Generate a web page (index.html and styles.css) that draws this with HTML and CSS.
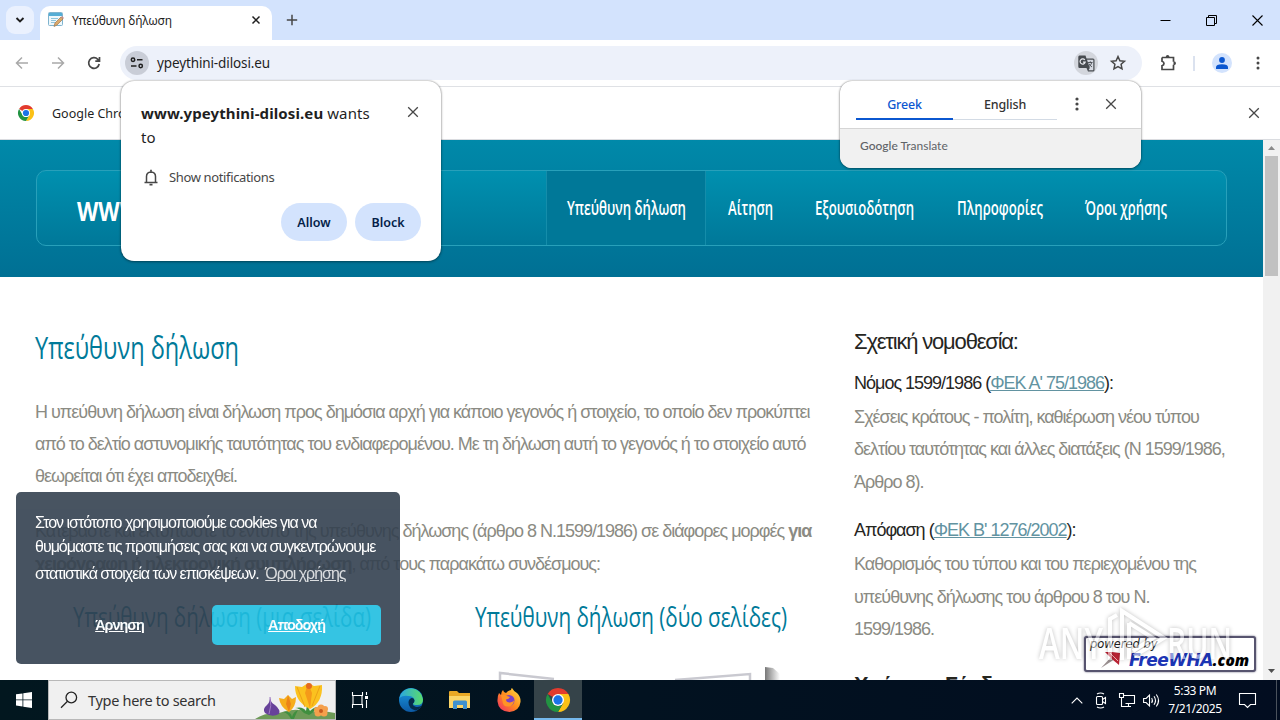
FILE: index.html
```html
<!DOCTYPE html>
<html lang="el">
<head>
  <meta charset="UTF-8">
  <meta name="viewport" content="width=device-width, initial-scale=1">
  <title>Υπεύθυνη δήλωση</title>
  <link rel="stylesheet" href="styles.css">
</head>
<body>
  <!-- tab strip -->
  <div class="tabstrip">
    <div class="tab-search"><svg width="10" height="10" viewBox="0 0 10 10"><path d="M1.500 3l3.500 3.500L8.500 3" class="ln dark w2"/></svg></div>
    <div class="tab">
      <svg class="favicon" width="16" height="16" viewBox="0 0 16 16">
        <rect x="0.500" y="0.500" width="14" height="13" rx="1" fill="#eef7fb" stroke="#7fb4cf"/>
        <rect x="1" y="1" width="13" height="3" fill="#55add5"/>
        <path d="M3 6.500h7M3 8.500h5M3 10.500h4" stroke="#8fc4db"/>
        <path d="M6 14.500l1-3.500 6-6 2 2-6 6z" fill="#dca96a" stroke="#9a7750" stroke-width=".7"/>
        <path d="M13 5l1-1 2 2-1 1z" fill="#c98d8d"/>
      </svg>
      <span class="tab-title">Υπεύθυνη δήλωση</span>
      <svg class="tab-close" width="10" height="10" viewBox="0 0 10 10"><path d="M1.500 1.500l7 7M8.500 1.500l-7 7" class="ln dark w15"/></svg>
    </div>
    <svg class="tab-new" width="12" height="12" viewBox="0 0 12 12"><path d="M6 .8v10.400M.8 6h10.400" class="ln w15"/></svg>
    <div class="win-buttons">
      <svg width="11" height="11" viewBox="0 0 11 11"><path d="M.5 5.500h10" stroke="#000"/></svg>
      <svg width="11" height="11" viewBox="0 0 11 11"><path d="M.5 2.500h8v8h-8zM2.500 2.500v-2h8v8h-2" fill="none" stroke="#000"/></svg>
      <svg width="11" height="11" viewBox="0 0 11 11"><path d="M.5 .5l10 10M10.500 .5l-10 10" stroke="#000" stroke-width="1.100"/></svg>
    </div>
  </div>

  <!-- toolbar -->
  <div class="toolbar">
    <svg class="nav-ico" width="14" height="14" viewBox="0 0 14 14"><path d="M13 7H2M7 1.500L1.500 7 7 12.500" class="ln pale w15"/></svg>
    <svg class="nav-ico" width="14" height="14" viewBox="0 0 14 14"><path d="M1 7h11M7 1.500L12.500 7 7 12.500" class="ln pale w15"/></svg>
    <svg class="nav-ico" width="14" height="14" viewBox="0 0 14 14"><path d="M12.200 8A5.300 5.300 0 1 1 10.800 3.300L12.300 4.800M12.500 1v4.200H8.300" class="ln w17"/></svg>
    <div class="omnibox">
      <div class="site-info">
        <svg width="14" height="12" viewBox="0 0 14 12"><circle cx="3" cy="2.700" r="1.700" class="ln dark w15"/><path d="M7 2.700h5.500M1 9h5.500" class="ln dark w15"/><circle cx="10.700" cy="9" r="1.700" class="ln dark w15"/></svg>
      </div>
      <span class="url">ypeythini-dilosi.eu</span>
      <div class="translate-ico">
        <svg width="17" height="17" viewBox="0 0 17 17">
          <path d="M1.500 0.500h6l1 3h6.500q1.500 0 1.500 1.500v10q0 1.500-1.500 1.500h-5l-1.500-3.500h-7Q.3 13 .3 11.500V2Q.3.5 1.500.5z" fill="#474b50"/>
          <path d="M9 4.700h6.300v10.600h-4.800l1.300-2.300z" fill="#d5d9e2"/>
          <path d="M6.800 5A2.600 2.600 0 1 0 7.200 7.200H5" fill="none" stroke="#e9ebf0" stroke-width="1.200"/>
          <path d="M10 7.500h4.500M12.300 6.300v1.200M13.800 7.600q-.8 2.600-3 4.200M11 8.700q1 2 3 3.300" fill="none" stroke="#474b50" stroke-width=".9"/>
        </svg>
      </div>
      <svg width="16" height="16" viewBox="0 0 16 16"><path d="M8 1.500l1.900 4.200 4.600.5-3.400 3.100.9 4.500L8 11.500l-4 2.300.9-4.500L1.500 6.200l4.600-.5z" class="ln w15"/></svg>
    </div>
    <svg class="ext" width="18" height="18" viewBox="0 0 18 18"><path d="M2 3.500h11.500V7.800M13.500 10.800v4.700H2v-3.800q2-.5 2-2.200T2 7.200V3.500" class="ln w17"/><path d="M5.600 3.200q.3-2.200 2-2.200t2 2.200zM13.500 7.300q2.500.2 2.500 2t-2.500 2z" fill="#474747"/></svg>
    <span class="bar"></span>
    <div class="avatar"><svg width="12" height="12" viewBox="0 0 12 12"><circle cx="6" cy="3" r="2.900" fill="#0b57d0"/><path d="M0 12V10.200Q0 7.200 6 7.200t6 3V12z" fill="#0b57d0"/></svg></div>
    <svg class="menu" width="4" height="14" viewBox="0 0 4 14"><g fill="#474747"><circle cx="2" cy="2" r="1.500"/><circle cx="2" cy="7" r="1.500"/><circle cx="2" cy="12" r="1.500"/></g></svg>
  </div>

  <div class="infobar">
    <svg width="16" height="16" viewBox="0 0 48 48">
      <circle cx="24" cy="24" r="24" fill="#fff"/>
      <path d="M24 24L3.200 12A24 24 0 0 1 44.800 12H24z" fill="#e33b2e"/>
      <path d="M44.800 12A24 24 0 0 1 24 48L34.400 30 24 12z" fill="#fbc116"/>
      <path d="M3.200 12A24 24 0 0 0 24 48L34.400 30A12 12 0 0 1 13.600 30z" fill="#229342"/>
      <circle cx="24" cy="24" r="12" fill="#fff"/><circle cx="24" cy="24" r="9.300" fill="#1a73e8"/>
    </svg>
    <span>Google Chrome</span>
    <svg class="info-close" width="12" height="12" viewBox="0 0 12 12"><path d="M1.200 1.200l9.600 9.600M10.800 1.200l-9.600 9.600" class="ln w13"/></svg>
  </div>

  <!-- page -->
  <div class="viewport">
    <div class="page">
      <header class="header">
        <div class="navbox">
          <div class="brand"><svg width="64" height="34"><text x="0" y="27" textLength="64" lengthAdjust="spacingAndGlyphs">WWW</text></svg></div>
          <nav class="nav">
            <a class="active"><svg width="119" height="34"><text x="0" y="25" textLength="119" lengthAdjust="spacingAndGlyphs">Υπεύθυνη δήλωση</text></svg></a>
            <a><svg width="45" height="34"><text x="0" y="25" textLength="45" lengthAdjust="spacingAndGlyphs">Αίτηση</text></svg></a>
            <a><svg width="100" height="34"><text x="0" y="25" textLength="99" lengthAdjust="spacingAndGlyphs">Εξουσιοδότηση</text></svg></a>
            <a><svg width="86" height="34"><text x="0" y="25" textLength="86" lengthAdjust="spacingAndGlyphs">Πληροφορίες</text></svg></a>
            <a><svg width="82" height="34"><text x="0" y="25" textLength="82" lengthAdjust="spacingAndGlyphs">Όροι χρήσης</text></svg></a>
          </nav>
        </div>
      </header>

      <div class="columns">
        <main class="main">
          <svg class="title" width="210" height="48"><text x="0" y="34" textLength="204" lengthAdjust="spacingAndGlyphs">Υπεύθυνη δήλωση</text></svg>
          <p>Η υπεύθυνη δήλωση είναι δήλωση προς δημόσια αρχή για κάποιο γεγονός ή στοιχείο, το οποίο δεν προκύπτει<br>από το δελτίο αστυνομικής ταυτότητας του ενδιαφερομένου. Με τη δήλωση αυτή το γεγονός ή το στοιχείο αυτό<br>θεωρείται ότι έχει αποδειχθεί.</p>
          <p>Κατεβάστε και εκτυπώστε το έντυπο της υπεύθυνης δήλωσης (άρθρο 8 Ν.1599/1986) σε διάφορες μορφές <b>για</b><br><b>χειρόγραφη ή ηλεκτρονική συμπλήρωση</b>, από τους παρακάτω συνδέσμους:</p>
          <div class="forms">
            <div class="form">
              <svg class="form-title" width="300" height="44"><text x="0" y="30" textLength="298" lengthAdjust="spacingAndGlyphs">Υπεύθυνη δήλωση (μια σελίδα)</text></svg>
            </div>
            <div class="form">
              <svg class="form-title" width="314" height="44"><text x="0" y="30" textLength="312" lengthAdjust="spacingAndGlyphs">Υπεύθυνη δήλωση (δύο σελίδες)</text></svg>
              <svg class="sheets" width="310" height="20" viewBox="0 0 310 20">
                <defs><linearGradient id="shade"><stop offset="0" stop-color="#777"/><stop offset="1" stop-color="#fff"/></linearGradient></defs>
                <path d="M290 2l8 1 7 6v11h-15z" fill="url(#shade)"/>
                <path d="M25 20V8l54 6M275 20V9l-75 6" fill="none" stroke="#c9c9d0" stroke-width="2.500"/>
              </svg>
            </div>
          </div>
        </main>

        <aside class="side">
          <h2>Σχετική νομοθεσία:</h2>
          <h3>Νόμος 1599/1986 (<a>ΦΕΚ Α' 75/1986</a>):</h3>
          <p>Σχέσεις κράτους - πολίτη, καθιέρωση νέου τύπου<br>δελτίου ταυτότητας και άλλες διατάξεις (Ν 1599/1986,<br>Άρθρο 8).</p>
          <h3>Απόφαση (<a>ΦΕΚ Β' 1276/2002</a>):</h3>
          <p>Καθορισμός του τύπου και του περιεχομένου της<br>υπεύθυνης δήλωσης του άρθρου 8 του Ν.<br>1599/1986.</p>
          <h2 class="links">Χρήσιμοι Σύνδεσμοι</h2>
        </aside>
      </div>

      <!-- cookie banner -->
      <div class="cookies">
        <p>Στον ιστότοπο χρησιμοποιούμε cookies για να<br>θυμόμαστε τις προτιμήσεις σας και να συγκεντρώνουμε<br><span class="last">στατιστικά στοιχεία των επισκέψεων. <a>Όροι χρήσης</a></span></p>
        <div class="cookie-buttons">
          <a class="deny">Άρνηση</a>
          <a class="allow">Αποδοχή</a>
        </div>
      </div>

      <!-- hosting badge -->
      <div class="hosting">
        <span class="powered">powered by</span>
        <div class="wha">
          <svg width="22" height="18" viewBox="0 0 22 18"><path d="M1 17L12 5l3 3z" fill="#9a8f90"/><path d="M5 1h7l8 1-1 12-6-5-3-3z" fill="#b92334"/><path d="M10 2l8 8" stroke="#efb0b0"/></svg>
          <b>FreeWHA</b><i>.com</i>
        </div>
      </div>
      <svg class="watermark" width="200" height="62" viewBox="0 0 200 62">
        <g class="wm-text">
          <text x="2" y="50" textLength="64" lengthAdjust="spacingAndGlyphs">ANY</text>
          <text x="130" y="50" textLength="65" lengthAdjust="spacingAndGlyphs">RUN</text>
        </g>
        <path class="wm-mark" d="M73 51V10l7-4M85 51V2l42 27-30 18M92 14v36M92 14l24 15-20 13"/>
      </svg>
    </div>
    <div class="scrollbar">
      <svg width="17" height="16"><path d="M5 10l3.500-4 3.500 4z" fill="#8a8a8a"/></svg>
      <div class="thumb"></div>
      <svg class="down" width="17" height="17"><path d="M5 6l3.500 4L12 6z" fill="#505050"/></svg>
    </div>
  </div>

  <!-- taskbar -->
  <div class="taskbar">
    <div class="start"><svg width="16" height="16" viewBox="0 0 16 16"><path d="M0 2.300L6.500 1.400V7.500H0zM7.300 1.200L16 0v7.500H7.300zM0 8.300h6.500v6.200L0 13.600zM7.300 8.300H16V16l-8.700-1.200z" fill="#fff"/></svg></div>
    <div class="search">
      <svg width="18" height="18" viewBox="0 0 18 18"><circle cx="11.300" cy="6.500" r="5.300" fill="none" stroke="#222" stroke-width="1.300"/><path d="M7.500 10.300L1 16.800" stroke="#222" stroke-width="1.300"/></svg>
      <span>Type here to search</span>
      <svg class="flowers" width="80" height="38" viewBox="0 0 80 38">
        <path d="M0 38q10-7 24-6 16-6 30-1 14-2 26 1v6z" fill="#6d9a57"/>
        <path d="M36 38q-3-6-8-7 8-1 9 5 1-5 6-7-3 6-4 9zM49 32q-5-5-9-5 8-2 11 3l1-6 3 6q4-4 8-4-5 6-9 8z" fill="#3f8f3f"/>
        <path d="M15 16q0 5 5 8 6 5 4 9-7 4-14-1-3-4 2-8 3-3 3-8z" fill="#67429a"/><path d="M15 16q2 9-1 17" stroke="#a17cc6" fill="none"/>
        <path d="M24 17l5 1 4-4 4 4 4-2q0 10-7 15-9-5-10-14z" fill="#f6ad1c"/><path d="M33 14l3 9-2 8-3-8z" fill="#ec8419"/>
        <path d="M40 5l7 1 6-4 6 3 8-1q1 17-12 24-15-7-15-23z" fill="#fbc21f"/><path d="M53 2l4 10-2 15-5-15z" fill="#f59a19"/><path d="M42 6l8 20M65 5l-8 20" stroke="#eda117" fill="none"/><circle cx="54" cy="5" r="3" fill="#e56a20"/>
        <g fill="#f5a04c"><circle cx="66" cy="27" r="3.500"/><circle cx="69" cy="32" r="3.500"/><circle cx="63" cy="32" r="3.500"/><circle cx="62" cy="29" r="3"/><circle cx="70" cy="28" r="3"/></g><circle cx="66" cy="30" r="2" fill="#c65a1e"/>
      </svg>
    </div>
    <div class="app view"><svg width="18" height="18" viewBox="0 0 18 18"><path d="M1.500 1v3.500h10V1M1.500 17v-3.500h10V17M2 4.500v9M11 4.500v9M15.500 1v3M15.500 9v8" fill="none" stroke="#fff" stroke-width="1.100"/><rect x="14" y="5" width="3" height="3" fill="#fff"/></svg></div>
    <div class="app"><svg width="24" height="24" viewBox="0 0 24 24">
      <defs><linearGradient id="edge1" x2="1"><stop offset="0" stop-color="#2aa7e0"/><stop offset="1" stop-color="#5bdc6b"/></linearGradient><linearGradient id="edge2" x2="0" y2="1"><stop offset="0" stop-color="#1b9be2"/><stop offset="1" stop-color="#0c59a4"/></linearGradient></defs>
      <circle cx="12" cy="12" r="12" fill="url(#edge2)"/>
      <path d="M.3 10A12 12 0 0 1 24 11.500Q24 17 18 17q-4 0-4-1.500 1.500-1 1.500-3Q15 8 9.500 8 4 7 .3 10z" fill="url(#edge1)"/>
      <path d="M14 15.500q1.500-1 1.500-3Q15.200 9.500 12.500 10q-3 1-3 4.500 0 6 7 8 4-1 6.500-5-3 2-6.500 1.200Q13 17.500 14 15.500z" fill="#052b4d"/>
    </svg></div>
    <div class="app"><svg width="22" height="20" viewBox="0 0 22 20"><path d="M0 2q0-1 1-1h7l2 2h11v15H0z" fill="#e9a825"/><path d="M0 6h21v12H0z" fill="#fbd568"/><path d="M4 19v-7q0-1.500 1.500-1.500h11Q18 10.500 18 12v7h-4v-4H8v4z" fill="#3e91cf"/></svg></div>
    <div class="app"><svg width="24" height="24" viewBox="0 0 24 24">
      <defs><linearGradient id="fox" x1="1" x2="0" y2="1"><stop offset="0" stop-color="#ffe244"/><stop offset=".5" stop-color="#ff8a1e"/><stop offset="1" stop-color="#f0256c"/></linearGradient></defs>
      <path d="M2 5l2 2q0-3 2-5 .5 2.500 3 3 2-2.500 5-3 0-1.500 1-2 1.500 3 5 5 4 4 3.500 9-1 9-11 10Q1.500 23.500.5 13.500.3 8 2 5z" fill="url(#fox)"/>
      <circle cx="12" cy="12.500" r="5.500" fill="#7a41c7"/><path d="M4 7q4-1 6 1l3 1q-1 2-4 2.500 0 3 4 3 3-.5 4-2-.5 6-6 6T5.500 13z" fill="#ff9425"/>
    </svg></div>
    <div class="app on"><svg width="24" height="24" viewBox="0 0 48 48">
      <path d="M24 24L3.200 12A24 24 0 0 1 44.800 12H24z" fill="#e33b2e"/>
      <path d="M44.800 12A24 24 0 0 1 24 48L34.400 30 24 12z" fill="#fbc116"/>
      <path d="M3.200 12A24 24 0 0 0 24 48L34.400 30A12 12 0 0 1 13.600 30z" fill="#229342"/>
      <circle cx="24" cy="24" r="12" fill="#fff"/><circle cx="24" cy="24" r="9.300" fill="#1a73e8"/>
    </svg></div>
    <div class="tray">
      <svg width="12" height="7" viewBox="0 0 12 7"><path d="M.7 6.300L6 1l5.300 5.300" class="ti"/></svg>
      <svg width="12" height="17" viewBox="0 0 12 17"><rect x="1.500" y="4.500" width="6" height="8" rx="1" class="ti"/><path d="M7.500 7.500l3-2v6l-3-2M2 2q3.500-2 7 0M2 15q3.500 2 7 0" class="ti"/></svg>
      <svg width="16" height="14" viewBox="0 0 16 14"><path d="M4.500 2.500h11v8h-9M4 13.500h8M9.500 10.500v3M.5.500h4v4h-4zM2.500 4.500v9H5" class="ti"/></svg>
      <svg width="17" height="15" viewBox="0 0 17 15"><path d="M.6 5.500h2.500L6.500 2v11L3.100 9.500H.6zM8.700 5q1.500 2.500 0 5M11 3.200q3 4.300 0 8.600M13.300 1.500q4.500 6 0 12" class="ti"/></svg>
    </div>
    <div class="clock">5:33 PM<br>7/21/2025</div>
    <svg class="note" width="17" height="17" viewBox="0 0 17 17"><path d="M.5 1.500h16v11h-5l-3 3-3-3h-5z" class="ti"/></svg>
    <div class="peek"></div>
  </div>

  <!-- permission popup -->
  <div class="permission">
    <div class="perm-head">
      <div><b>www.ypeythini-dilosi.eu</b> wants<br>to</div>
      <svg width="12" height="12" viewBox="0 0 12 12"><path d="M1.200 1.200l9.600 9.600M10.800 1.200l-9.600 9.600" class="ln w13"/></svg>
    </div>
    <div class="perm-row">
      <svg width="14" height="17" viewBox="0 0 14 17"><path d="M.5 13.500h13M2.500 13.500V7.500Q2.500 3.200 7 3q4.500.2 4.500 4.500v6" class="ln w15"/><path d="M7 .8v2M5.500 15.700h3" class="ln w17"/></svg>
      <span>Show notifications</span>
    </div>
    <div class="perm-buttons"><button>Allow</button><button>Block</button></div>
  </div>

  <!-- translate popup -->
  <div class="translate">
    <div class="tr-top">
      <div class="tr-tab sel">Greek</div>
      <div class="tr-tab">English</div>
      <svg class="tr-menu" width="4" height="14" viewBox="0 0 4 14"><g fill="#474747"><circle cx="2" cy="2" r="1.600"/><circle cx="2" cy="7" r="1.600"/><circle cx="2" cy="12" r="1.600"/></g></svg>
      <svg class="tr-close" width="12" height="12" viewBox="0 0 12 12"><path d="M1.200 1.200l9.600 9.600M10.800 1.200l-9.600 9.600" class="ln w13"/></svg>
    </div>
    <div class="tr-foot"><b>Google</b> Translate</div>
  </div>
</body>
</html>
```
FILE: styles.css
```css
* {
  box-sizing: border-box;
  margin: 0;
  padding: 0;
}

body {
  width: 1280px;
  height: 720px;
  overflow: hidden;
  display: flex;
  flex-direction: column;
  position: relative;
  background: #fff;
  font-family: "Noto Sans", "Open Sans", sans-serif;
  color: #1f1f1f;
}

svg {
  display: block;
  flex-shrink: 0;
  overflow: visible;
}

/* icon strokes */
.ln {
  fill: none;
  stroke: #474747;
}
.dark { stroke: #1f1f1f; }
.pale { stroke: #a9a9a9; }
.w13 { stroke-width: 1.3; }
.w15 { stroke-width: 1.5; }
.w17 { stroke-width: 1.7; }
.w2 { stroke-width: 1.9; }

/* tab strip */
.tabstrip {
  height: 40px;
  background: #d3e3fd;
  display: flex;
  align-items: center;
  padding-left: 6px;
}

.tab-search {
  width: 28px;
  height: 28px;
  border-radius: 9px;
  background: #eaf1fe;
  display: flex;
  align-items: center;
  justify-content: center;
}

.tab {
  width: 232px;
  height: 34px;
  margin: 6px 0 0 6px;
  padding: 0 11px 6px 8px;
  background: #fff;
  border-radius: 10px 10px 0 0;
  display: flex;
  align-items: center;
}

.tab-title {
  margin-left: 8px;
  flex: 1;
  font-size: 12px;
  letter-spacing: -.2px;
}

.tab-new {
  margin-left: 14px;
}

.win-buttons {
  margin-left: auto;
  padding-right: 17px;
  display: flex;
  gap: 35px;
}

/* toolbar */
.toolbar {
  height: 47px;
  border-bottom: 1px solid #dfe1e5;
  display: flex;
  align-items: center;
  padding-left: 15px;
}

.nav-ico {
  margin-right: 22px;
}

.omnibox {
  width: 1022px;
  height: 34px;
  margin-left: -3px;
  border-radius: 17px;
  background: #edf1fa;
  display: flex;
  align-items: center;
  padding: 0 16px 0 5px;
}

.site-info,
.translate-ico {
  width: 24px;
  height: 24px;
  border-radius: 50%;
  background: #c9cdd7;
  display: flex;
  align-items: center;
  justify-content: center;
}

.translate-ico {
  margin-right: 12px;
  background: #d3d6dd;
}

.url {
  margin-left: 8px;
  flex: 1;
  font-size: 13.5px;
  letter-spacing: -.12px;
}

.ext {
  margin-left: 18px;
}

.bar {
  width: 2px;
  height: 15px;
  margin: 0 17px 0 15px;
  background: #dbe2ef;
}

.avatar {
  width: 20px;
  height: 20px;
  border-radius: 50%;
  background: #d3e3fd;
  display: flex;
  align-items: center;
  justify-content: center;
}

.menu {
  margin-left: 24px;
}

.infobar {
  height: 53px;
  display: flex;
  align-items: center;
  padding: 0 20px 0 18px;
  border-bottom: 1px solid #dadce0;
  font-size: 12.5px;
}

.infobar span {
  margin-left: 18px;
}

.info-close {
  margin-left: auto;
}

/* page */
.viewport {
  height: 540px;
  display: flex;
}

.page {
  width: 1263px;
  height: 540px;
  overflow: hidden;
  position: relative;
  font-family: "Liberation Sans", Arial, sans-serif;
}

.header {
  height: 137px;
  padding: 30px 36px 0;
  background: linear-gradient(#0089a9, #007094);
}

.navbox {
  height: 76px;
  border: 1px solid #28a0ba;
  border-radius: 10px;
  background: linear-gradient(#0090af, #007899);
  display: flex;
}

.brand {
  width: 509px;
  padding: 23px 0 0 40px;
}

.brand text {
  font: bold 26px "Open Sans", sans-serif;
  fill: #fff;
}

.nav {
  display: flex;
}

.nav a {
  padding: 19px 21px 0 21px;
}

.nav a.active {
  padding: 19px 19px 0 20px;
  margin-right: 1px;
  background: #007898;
  border-left: 1px solid #158daa;
  border-right: 1px solid #158daa;
}

.nav text {
  font: 600 19.5px "Open Sans", sans-serif;
  fill: #fff;
}

.columns {
  display: flex;
  padding-left: 35px;
}

.main {
  width: 819px;
  padding-top: 48px;
}

.title text {
  font: 500 31px "Open Sans", sans-serif;
  fill: #007a99;
}

.main p,
.side p {
  font-size: 18px;
  line-height: 32.4px;
  letter-spacing: -1px;
  color: #8b8b83;
  white-space: nowrap;
}

.main p {
  margin-top: 22.5px;
}

.forms {
  display: flex;
  margin-top: 17px;
}

.form {
  width: 402px;
  padding-left: 38px;
}

.form-title text {
  font: 500 27.5px "Open Sans", sans-serif;
  fill: #007a99;
}

.sheets {
  margin: 24px 0 0;
}

.side {
  padding-top: 49px;
  white-space: nowrap;
}

.side h2 {
  font-size: 22px;
  font-weight: normal;
  line-height: 32px;
  letter-spacing: -1.2px;
  color: #26261f;
}

.side h3 {
  font-size: 18px;
  font-weight: normal;
  line-height: 32px;
  letter-spacing: -1px;
  color: #26261f;
  margin: 9px 0 2px;
}

.side p + h3 {
  margin-top: 16px;
}

.side h3 a {
  color: #6293a1;
  text-decoration: underline;
}

.side .links {
  margin-top: 24px;
  font-weight: bold;
}

/* cookie banner */
.cookies {
  position: absolute;
  left: 16px;
  top: 352px;
  width: 384px;
  height: 172px;
  padding: 19px 19px;
  border-radius: 5px;
  background: #344150;
  opacity: .9;
  color: #fff;
}

.cookies p {
  font-size: 16px;
  line-height: 24px;
  letter-spacing: -1px;
  white-space: nowrap;
}

.cookies .last {
  position: relative;
  top: 3px;
}

.cookies p a {
  margin-left: 3px;
  opacity: .8;
  text-decoration: underline;
}

.cookie-buttons {
  display: flex;
  margin-top: 22px;
}

.cookie-buttons a {
  height: 40px;
  font-size: 14.4px;
  font-weight: bold;
  line-height: 41px;
  letter-spacing: -1px;
  text-align: center;
  text-decoration: underline;
}

.deny {
  width: 177px;
  padding-right: 8px;
}

.allow {
  width: 169px;
  border-radius: 5px;
  background: #20bee0;
}

/* badge */
.hosting {
  position: absolute;
  left: 1084px;
  top: 496px;
  width: 172px;
  height: 36px;
  border: 2px solid #57546f;
  border-radius: 3px;
  background: #fff;
  box-shadow: 0 0 2px #57546f;
}

.powered {
  display: block;
  padding-left: 4px;
  font: italic 11.5px "DejaVu Sans", sans-serif;
  line-height: 13px;
  color: #222;
}

.wha {
  display: flex;
  align-items: center;
  padding-left: 14px;
  line-height: 18px;
}

.wha b {
  margin-left: 7px;
  font: italic 900 17px "DejaVu Sans", sans-serif;
  line-height: 18px;
  letter-spacing: -.5px;
  color: #1c35b5;
}

.wha i {
  font: italic 900 15.5px "Noto Sans", sans-serif;
  line-height: 18px;
  color: #000;
}

.watermark {
  position: absolute;
  left: 1037px;
  top: 469px;
  filter: drop-shadow(0 0 2px rgba(0, 0, 0, .5));
  opacity: .5;
}

.wm-text {
  font: 600 44px "Open Sans", sans-serif;
  fill: #fff;
}

.wm-mark {
  fill: none;
  stroke: #fff;
  stroke-width: 4;
}

.scrollbar {
  width: 17px;
  background: #f1f1f1;
  display: flex;
  flex-direction: column;
  align-items: center;
}

.thumb {
  width: 13px;
  height: 120px;
  background: #c1c1c1;
}

.down {
  margin-top: auto;
}

/* taskbar */
.taskbar {
  height: 40px;
  background: linear-gradient(90deg, #02171f, #021220 50%, #020d20);
  display: flex;
  align-items: center;
  color: #fff;
}

.start {
  width: 48px;
  padding-left: 16px;
}

.search {
  width: 288px;
  height: 40px;
  background: #f0f0f0;
  border: 1px solid #b8b8b8;
  display: flex;
  align-items: center;
  padding-left: 11px;
  font-size: 14.5px;
  letter-spacing: -.3px;
  color: #333;
  position: relative;
}

.search span {
  margin-left: 10px;
}

.flowers {
  position: absolute;
  right: 0;
  bottom: 0;
  overflow: hidden;
}

.app {
  width: 49px;
  height: 40px;
  display: flex;
  align-items: center;
  justify-content: center;
}

.app.view {
  width: 50px;
  padding-right: 2px;
}

.app.on {
  width: 48px;
  margin-left: 1px;
  background: #354349;
  border-bottom: 2px solid #76b9ed;
  padding-top: 2px;
}

.tray {
  margin-left: auto;
  display: flex;
  align-items: center;
  gap: 12px;
}

.tray svg:last-child {
  margin-left: -4px;
}

.ti {
  fill: none;
  stroke: #fff;
  stroke-width: 1.1;
}

.clock {
  width: 60px;
  margin-left: 5px;
  font-size: 12px;
  line-height: 18px;
  letter-spacing: -.4px;
  text-align: center;
}

.note {
  margin-left: 14px;
}

.peek {
  width: 4px;
  height: 40px;
  margin-left: 20px;
  border-left: 1px solid #4a525c;
}

/* popups */
.permission,
.translate {
  position: absolute;
  background: #fff;
  box-shadow: 0 0 2px rgba(0, 0, 0, .45), 0 1px 3px rgba(0, 0, 0, .3);
}

.permission {
  left: 121px;
  top: 81px;
  width: 320px;
  height: 180px;
  padding: 20px;
  border-radius: 13px;
}

.perm-head {
  display: flex;
  justify-content: space-between;
  font-size: 15px;
  line-height: 24px;
  letter-spacing: .1px;
}

.perm-head svg {
  margin: 5px 2px 0 0;
}

.perm-row {
  display: flex;
  align-items: center;
  height: 20px;
  margin: 18px 0 0 3px;
  font-size: 13px;
  letter-spacing: -.36px;
  color: #474747;
}

.perm-row span {
  margin-left: 11px;
}

.perm-buttons {
  display: flex;
  justify-content: flex-end;
  gap: 8px;
  margin-top: 16px;
}

.perm-buttons button {
  width: 66px;
  height: 38px;
  border: 0;
  border-radius: 19px;
  background: #d3e3fd;
  font: 600 12.5px "Noto Sans", sans-serif;
  color: #041e49;
}

.translate {
  left: 840px;
  top: 81px;
  width: 301px;
  height: 87px;
  border-radius: 12px;
  overflow: hidden;
}

.tr-top {
  height: 48px;
  border-bottom: 1px solid #d5d5d5;
  display: flex;
  align-items: flex-start;
  padding-left: 16px;
}

.tr-tab {
  width: 104px;
  height: 39px;
  border-bottom: 1px solid #d3dbe5;
  font-size: 12.5px;
  font-weight: 500;
  line-height: 47px;
  letter-spacing: -.15px;
  text-align: center;
  color: #333;
}

.tr-tab.sel {
  width: 97px;
  border-bottom: 2px solid #0b57d0;
  color: #0b57d0;
}

.tr-menu {
  margin: 16px 0 0 18px;
}

.tr-close {
  margin: 17px 0 0 26px;
}

.tr-foot {
  height: 39px;
  padding-left: 20px;
  background: #f1f1f1;
  font: 12px "Lato", sans-serif;
  line-height: 33px;
  color: #5f6368;
}

.tr-foot b {
  font-weight: 500;
}
```
